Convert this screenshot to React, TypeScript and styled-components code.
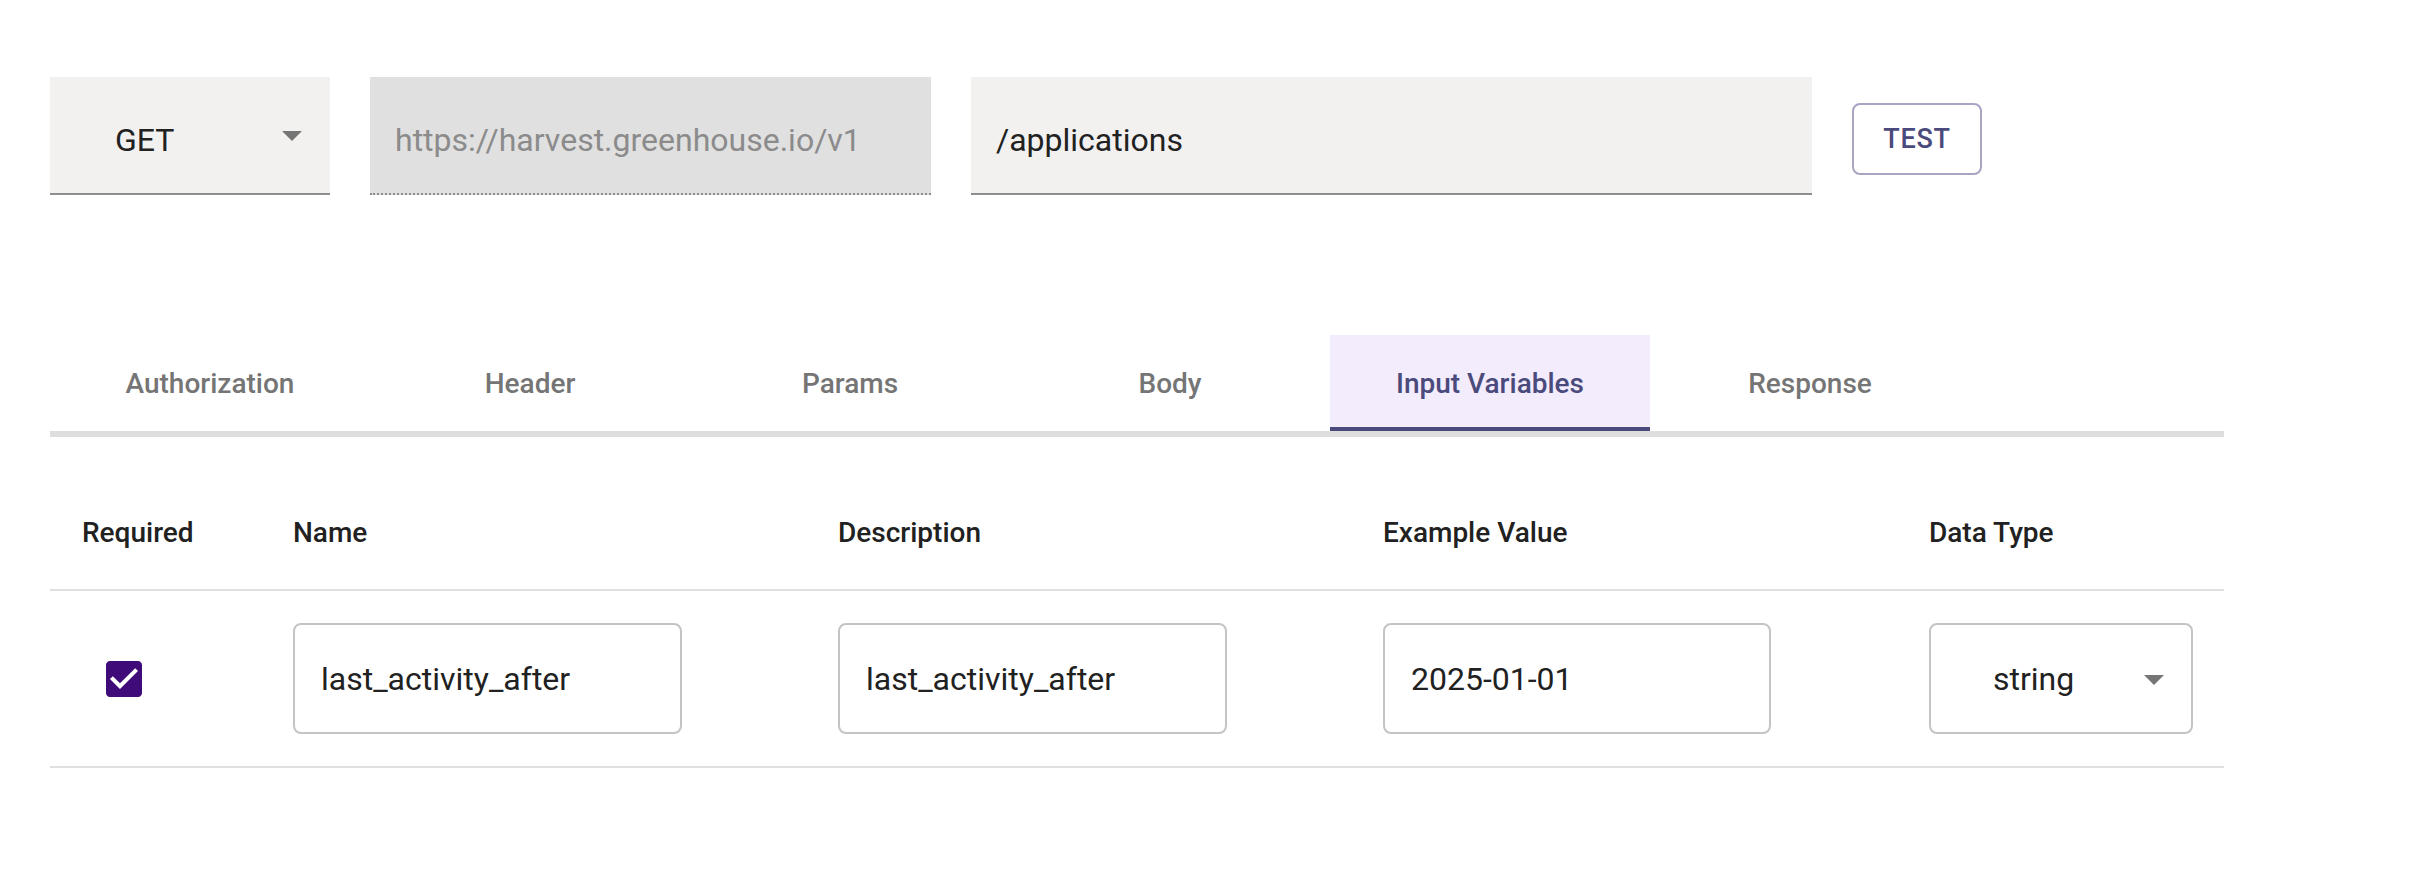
import React from "react";
import styled, { createGlobalStyle } from "styled-components";

const GlobalStyle = createGlobalStyle`
  html, body { margin: 0; padding: 0; background: #ffffff; }
  body { font-family: Roboto, "Liberation Sans", Arial, sans-serif; color: #212121; }
  * { box-sizing: border-box; }
`;

const Page = styled.div`
  padding: 77px 0 0 50px;
  width: 2424px;
`;

const TopRow = styled.div`
  display: flex;
  align-items: center;
  gap: 40px;
`;

const FilledField = styled.div<{ $w: number; $disabled?: boolean }>`
  width: ${(p) => p.$w}px;
  height: 118px;
  display: flex;
  align-items: center;
  padding: 10px 26px 0 25px;
  background: ${(p) => (p.$disabled ? "#e0e0e0" : "#f2f1f0")};
  border-bottom: 2px ${(p) => (p.$disabled ? "dotted #8b8b8b" : "solid #8e8e8e")};
  font-size: 32px;
  line-height: 1;
  color: ${(p) => (p.$disabled ? "#8b8b8b" : "#212121")};
  white-space: nowrap;
`;

const SelectField = styled(FilledField)`
  padding-left: 65px;
  padding-right: 14px;
  justify-content: space-between;
`;

const Arrow = styled.svg`
  width: 48px;
  height: 48px;
  fill: #757575;
  flex: none;
  margin-top: -10px;
`;

const OutlinedButton = styled.button`
  width: 130px;
  height: 72px;
  margin-top: 5px;
  border: 2px solid #a7a5c3;
  border-radius: 8px;
  background: #fff;
  color: #4a4a7c;
  font-family: Roboto, "Liberation Sans", Arial, sans-serif;
  font-size: 27px;
  font-weight: 500;
  letter-spacing: 0.8px;
  text-transform: uppercase;
  padding: 0;
`;

const TabBar = styled.div`
  margin-top: 140px;
  width: 2174px;
  display: flex;
  border-bottom: 6px solid #dedede;
`;

const Tab = styled.div<{ $active?: boolean }>`
  width: 320px;
  height: 96px;
  display: flex;
  align-items: center;
  justify-content: center;
  font-size: 28px;
  font-weight: 500;
  color: ${(p) => (p.$active ? "#4a4a7c" : "#757575")};
  background: ${(p) => (p.$active ? "#f3ecfc" : "transparent")};
  box-shadow: ${(p) => (p.$active ? "inset 0 -4px 0 #4a4a7c" : "none")};
`;

const Table = styled.div`
  margin-top: 40px;
  width: 2174px;
`;

const Row = styled.div`
  display: grid;
  grid-template-columns: 211px 545px 545px 546px 1fr;
  border-bottom: 2px solid #e0e0e0;
`;

const HeadCell = styled.div`
  padding: 32px;
  font-size: 28px;
  line-height: 48px;
  font-weight: 500;
  color: #212121;
`;

const Cell = styled.div`
  padding: 32px;
  display: flex;
  align-items: center;
`;

const CheckIcon = styled.svg`
  width: 48px;
  height: 48px;
  fill: #3f0b78;
  margin-left: 18px;
`;

const OutlinedInput = styled.div<{ $w: number }>`
  width: ${(p) => p.$w}px;
  height: 111px;
  border: 2px solid #c4c4c4;
  border-radius: 8px;
  display: flex;
  align-items: center;
  padding: 0 26px;
  font-size: 32px;
  line-height: 1;
  color: #212121;
`;

const OutlinedSelect = styled(OutlinedInput)`
  padding: 0 13px 0 62px;
  justify-content: space-between;
`;

const SelectArrow = styled(Arrow)`
  margin-top: 0;
`;

const tabs = ["Authorization", "Header", "Params", "Body", "Input Variables", "Response"];
const heads = ["Required", "Name", "Description", "Example Value", "Data Type"];

const arrowPath = "M7 10l5 5 5-5z";

export default function App() {
  return (
    <>
      <GlobalStyle />
      <Page>
        <TopRow>
          <SelectField $w={280}>
            <span>GET</span>
            <Arrow viewBox="0 0 24 24">
              <path d={arrowPath} />
            </Arrow>
          </SelectField>
          <FilledField $w={561} $disabled>
            https://harvest.greenhouse.io/v1
          </FilledField>
          <FilledField $w={841}>/applications</FilledField>
          <OutlinedButton>Test</OutlinedButton>
        </TopRow>

        <TabBar>
          {tabs.map((t) => (
            <Tab key={t} $active={t === "Input Variables"}>
              {t}
            </Tab>
          ))}
        </TabBar>

        <Table>
          <Row>
            {heads.map((h) => (
              <HeadCell key={h}>{h}</HeadCell>
            ))}
          </Row>
          <Row>
            <Cell>
              <CheckIcon viewBox="0 0 24 24">
                <path d="M19 3H5c-1.11 0-2 .9-2 2v14c0 1.1.89 2 2 2h14c1.11 0 2-.9 2-2V5c0-1.1-.89-2-2-2zm-9 14l-5-5 1.41-1.41L10 14.17l7.59-7.59L19 8l-9 9z" />
              </CheckIcon>
            </Cell>
            <Cell>
              <OutlinedInput $w={389}>last_activity_after</OutlinedInput>
            </Cell>
            <Cell>
              <OutlinedInput $w={389}>last_activity_after</OutlinedInput>
            </Cell>
            <Cell>
              <OutlinedInput $w={388}>2025-01-01</OutlinedInput>
            </Cell>
            <Cell>
              <OutlinedSelect $w={264}>
                <span>string</span>
                <SelectArrow viewBox="0 0 24 24">
                  <path d={arrowPath} />
                </SelectArrow>
              </OutlinedSelect>
            </Cell>
          </Row>
        </Table>
      </Page>
    </>
  );
}
